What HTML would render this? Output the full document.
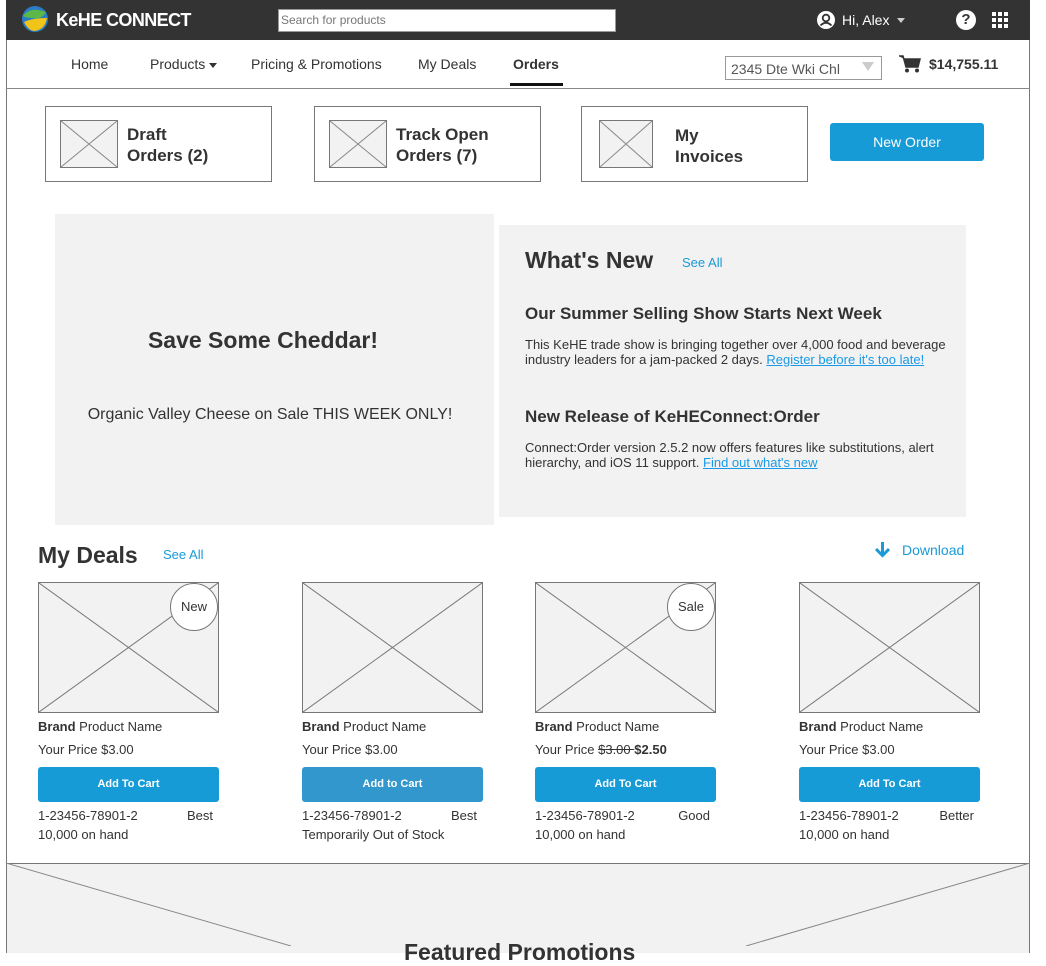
<!DOCTYPE html>
<html><head><meta charset="utf-8"><style>
*{box-sizing:border-box;margin:0;padding:0}
body{width:1046px;height:946px;overflow:hidden;background:#fff;font-family:"Liberation Sans",Arial,sans-serif;color:#333;position:relative}
.a{position:absolute}
.xb{position:absolute;border:1px solid #777;background:#f2f2f2}
.xb svg{position:absolute;left:0;top:0;width:100%;height:100%}
.tile{position:absolute;border:1px solid #777;background:#fff;width:227px;height:76px}
.tile .t{position:absolute;left:81px;top:17px;font-size:17px;font-weight:bold;line-height:21px;color:#333}
.btn{position:absolute;background:#179bd7;color:#fff;border-radius:3px;text-align:center}
.link{color:#1a9ad6}
.card{position:absolute;top:582px;width:181px;font-size:13px}
.card .img{position:relative;width:181px;height:131px;border:1px solid #777;background:#f2f2f2}
.card .img svg{position:absolute;left:0;top:0}
.badge{position:absolute;right:0;top:0;width:48px;height:48px;border:1px solid #777;border-radius:50%;background:#fff;text-align:center;line-height:46px;font-size:13px}
.card .l1{position:absolute;top:137px;left:0}
.card .l2{position:absolute;top:160px;left:0}
.card .b{position:absolute;top:185px;left:0;width:181px;height:35px;background:#179bd7;border-radius:3px;color:#fff;font-size:11px;font-weight:bold;text-align:center;line-height:35px}
.card .l3{position:absolute;top:226px;left:0;width:175px}
.card .l3 span{float:right}
.card .l4{position:absolute;top:245px;left:0}
</style></head><body>
<div class="a" style="left:6px;top:0;width:1024px;height:946px;border-left:1px solid #777;border-right:1px solid #777"></div>
<div class="a" style="left:6px;top:0;width:1024px;height:40px;background:#333"></div>
<svg class="a" style="left:20px;top:4px" width="30" height="30" viewBox="0 0 30 30"><circle cx="15" cy="15" r="13" fill="#2a7cc7"/><path d="M3 12 Q10 2 26 8 Q22 16 12 14 Q6 14 3 12Z" fill="#5bb848"/><path d="M4 18 Q12 14 27 14 Q25 26 14 27 Q8 26 4 18Z" fill="#f0c419"/></svg>
<div class="a" style="left:56px;top:10px;color:#fff;font-weight:bold;font-size:18px;letter-spacing:-0.6px">KeHE CONNECT</div>
<div class="a" style="left:278px;top:9px;width:338px;height:23px;background:#fff;border:1px solid #999;font-size:12px;color:#777;padding:3px 2px">Search for products</div>
<svg class="a" style="left:816px;top:10px" width="20" height="20" viewBox="0 0 20 20"><circle cx="10" cy="10" r="9" fill="#fff"/><circle cx="10" cy="8" r="3.3" fill="none" stroke="#333" stroke-width="1.8"/><path d="M4.5 15.5 Q10 10 15.5 15.5" fill="none" stroke="#333" stroke-width="1.8"/></svg>
<div class="a" style="left:842px;top:12px;color:#fff;font-size:14px">Hi, Alex</div>
<div class="a" style="left:897px;top:18px;width:0;height:0;border-left:4px solid transparent;border-right:4px solid transparent;border-top:5px solid #ccc"></div>
<div class="a" style="left:956px;top:10px;width:20px;height:20px;border-radius:50%;background:#fff;color:#333;font-weight:bold;font-size:15px;text-align:center;line-height:20px">?</div>
<svg class="a" style="left:992px;top:12px" width="17" height="17" viewBox="0 0 17 17" fill="#fff"><rect x="0" y="0" width="4" height="4"/><rect x="6" y="0" width="4" height="4"/><rect x="12" y="0" width="4" height="4"/><rect x="0" y="6" width="4" height="4"/><rect x="6" y="6" width="4" height="4"/><rect x="12" y="6" width="4" height="4"/><rect x="0" y="12" width="4" height="4"/><rect x="6" y="12" width="4" height="4"/><rect x="12" y="12" width="4" height="4"/></svg>
<div class="a" style="left:6px;top:88px;width:1024px;height:1px;background:#888"></div>
<div class="a" style="left:71px;top:56px;font-size:14px">Home</div>
<div class="a" style="left:150px;top:56px;font-size:14px">Products</div>
<div class="a" style="left:209px;top:63px;border-left:4px solid transparent;border-right:4px solid transparent;border-top:5px solid #333"></div>
<div class="a" style="left:251px;top:56px;font-size:14px">Pricing &amp; Promotions</div>
<div class="a" style="left:418px;top:56px;font-size:14px">My Deals</div>
<div class="a" style="left:513px;top:56px;font-size:14px;font-weight:bold">Orders</div>
<div class="a" style="left:510px;top:83px;width:53px;height:3px;background:#111"></div>
<div class="a" style="left:725px;top:56px;width:157px;height:24px;border:1px solid #999;font-size:14px;color:#555;padding:4px 0 0 5px">2345 Dte Wki Chl</div>
<div class="a" style="left:862px;top:62px;border-left:6px solid transparent;border-right:6px solid transparent;border-top:9px solid #ccc"></div>
<svg class="a" style="left:899px;top:55px" width="22" height="18" viewBox="0 0 22 18"><path d="M0 1 H4 L7 12 H19 L21 4 H5" fill="#333" stroke="#333" stroke-width="1.5"/><circle cx="8" cy="15.5" r="2" fill="#333"/><circle cx="18" cy="15.5" r="2" fill="#333"/></svg>
<div class="a" style="left:929px;top:56px;font-size:14px;font-weight:bold">$14,755.11</div>
<div class="tile" style="left:45px;top:106px"><div class="xb" style="left:14px;top:13px;width:58px;height:48px"><svg viewBox="0 0 56 46" preserveAspectRatio="none"><path d="M0 0L56 46M56 0L0 46" stroke="#888" stroke-width="1"/></svg></div><div class="t">Draft<br>Orders (2)</div></div>
<div class="tile" style="left:314px;top:106px"><div class="xb" style="left:14px;top:13px;width:58px;height:48px"><svg viewBox="0 0 56 46" preserveAspectRatio="none"><path d="M0 0L56 46M56 0L0 46" stroke="#888" stroke-width="1"/></svg></div><div class="t">Track Open<br>Orders (7)</div></div>
<div class="tile" style="left:581px;top:106px"><div class="xb" style="left:17px;top:13px;width:54px;height:48px"><svg viewBox="0 0 52 46" preserveAspectRatio="none"><path d="M0 0L52 46M52 0L0 46" stroke="#888" stroke-width="1"/></svg></div><div class="t" style="left:93px;top:18px">My<br>Invoices</div></div>
<div class="btn" style="left:830px;top:123px;width:154px;height:38px;line-height:38px;font-size:14px">New Order</div>
<div class="a" style="left:55px;top:214px;width:439px;height:311px;background:#f2f2f2"></div>
<div class="a" style="left:55px;top:327px;width:416px;text-align:center;font-size:23px;font-weight:bold">Save Some Cheddar!</div>
<div class="a" style="left:62px;top:406px;width:416px;text-align:center;font-size:16px">Organic Valley Cheese on Sale THIS WEEK ONLY!</div>
<div class="a" style="left:499px;top:225px;width:467px;height:292px;background:#f2f2f2"></div>
<div class="a" style="left:525px;top:247px;font-size:23px;font-weight:bold">What's New</div>
<div class="a link" style="left:682px;top:255px;font-size:13px">See All</div>
<div class="a" style="left:525px;top:304px;font-size:17px;font-weight:bold">Our Summer Selling Show Starts Next Week</div>
<div class="a" style="left:525px;top:337px;font-size:13px;line-height:15px;width:440px">This KeHE trade show is bringing together over 4,000 food and beverage industry leaders for a jam-packed 2 days. <u style="color:#1a9ae6">Register before it's too late!</u></div>
<div class="a" style="left:525px;top:407px;font-size:17px;font-weight:bold">New Release of KeHEConnect:Order</div>
<div class="a" style="left:525px;top:440px;font-size:13px;line-height:15px;width:440px">Connect:Order version 2.5.2 now offers features like substitutions, alert hierarchy, and iOS 11 support. <u style="color:#1a9ae6">Find out what's new</u></div>
<div class="a" style="left:38px;top:542px;font-size:23px;font-weight:bold">My Deals</div>
<div class="a link" style="left:163px;top:547px;font-size:13px">See All</div>
<svg class="a" style="left:874px;top:541px" width="17" height="17" viewBox="0 0 17 17"><path d="M8.5 1V14M2 8L8.5 14.5L15 8" fill="none" stroke="#1a9ad6" stroke-width="3"/></svg>
<div class="a link" style="left:902px;top:542px;font-size:14px">Download</div>
<div class="card" style="left:38px"><div class="img"><svg width="179" height="129"><path d="M0 0L179 129M179 0L0 129" stroke="#777"/></svg><div class="badge">New</div></div><div class="l1"><b>Brand</b> Product Name</div><div class="l2">Your Price $3.00</div><div class="b">Add To Cart</div><div class="l3">1-23456-78901-2<span>Best</span></div><div class="l4">10,000 on hand</div></div>
<div class="card" style="left:302px"><div class="img"><svg width="179" height="129"><path d="M0 0L179 129M179 0L0 129" stroke="#777"/></svg></div><div class="l1"><b>Brand</b> Product Name</div><div class="l2">Your Price $3.00</div><div class="b" style="background:#3197cc">Add to Cart</div><div class="l3">1-23456-78901-2<span>Best</span></div><div class="l4">Temporarily Out of Stock</div></div>
<div class="card" style="left:535px"><div class="img"><svg width="179" height="129"><path d="M0 0L179 129M179 0L0 129" stroke="#777"/></svg><div class="badge">Sale</div></div><div class="l1"><b>Brand</b> Product Name</div><div class="l2">Your Price <s>$3.00 </s> <b>$2.50</b></div><div class="b">Add To Cart</div><div class="l3">1-23456-78901-2<span>Good</span></div><div class="l4">10,000 on hand</div></div>
<div class="card" style="left:799px"><div class="img"><svg width="179" height="129"><path d="M0 0L179 129M179 0L0 129" stroke="#777"/></svg></div><div class="l1"><b>Brand</b> Product Name</div><div class="l2">Your Price $3.00</div><div class="b">Add To Cart</div><div class="l3">1-23456-78901-2<span>Better</span></div><div class="l4">10,000 on hand</div></div>
<div class="a" style="left:6px;top:863px;width:1024px;height:90px;background:#f2f2f2;border-top:1px solid #777;border-left:1px solid #777;border-right:1px solid #777"></div>
<svg class="a" style="left:6px;top:863px" width="1024" height="83"><path d="M0 0L285 83M1024 0L740 83" stroke="#888"/></svg>
<div class="a" style="left:404px;top:939px;font-size:23px;font-weight:bold">Featured Promotions</div>
</body></html>
